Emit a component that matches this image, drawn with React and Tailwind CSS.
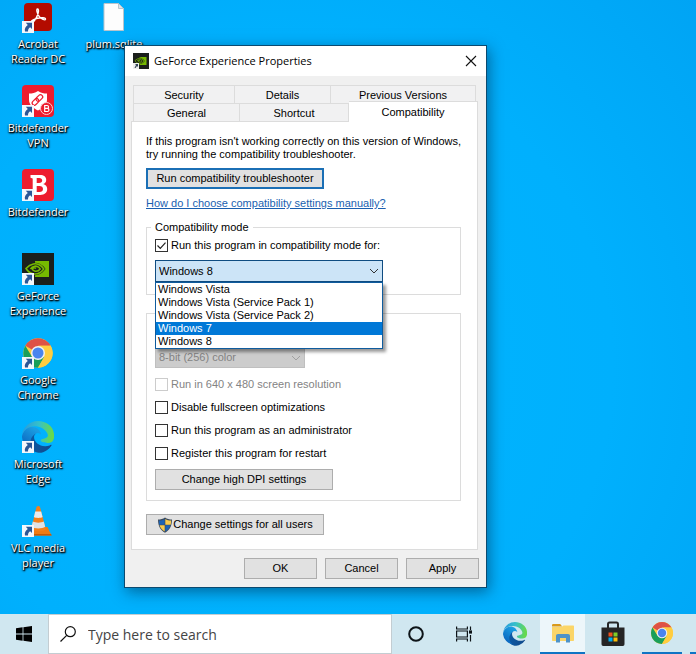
// src/App.jsx
import { useState } from "react";

const OS_OPTIONS = [
  "Windows Vista",
  "Windows Vista (Service Pack 1)",
  "Windows Vista (Service Pack 2)",
  "Windows 7",
  "Windows 8",
];

/* ---------- icons ---------- */

function ShortcutArrow() {
  return (
    <svg viewBox="0 0 12 12" className="absolute bottom-0 left-0 size-3" aria-hidden="true">
      <rect width="12" height="12" fill="#f4f7fb" />
      <path d="M3.800 1.800h6.200v6.200L8.200 6.300C6.600 7.200 6 8.500 6 10.400H3C2.200 7.600 3.700 5.300 5.800 4z" fill="#2b5797" />
    </svg>
  );
}

function AcrobatIcon() {
  return (
    <svg viewBox="0 0 32 32" className="size-8" aria-hidden="true">
      <rect x="2" y="2" width="28" height="28" rx="4" fill="#b30b00" />
      <path
        d="M15.500 8c1.800 0 .9 5-1 8.400-1.700 3.200-4 6-5.200 5.200-1.300-1.100 2.200-3.400 6.200-4.300 3.700-.9 8.200-.8 8 .9-.3 1.700-4.200-.2-6.200-2.600C15.200 13.100 14 8 15.500 8z"
        fill="none"
        stroke="#fff"
        strokeWidth="1.400"
      />
    </svg>
  );
}

function VpnIcon() {
  return (
    <svg viewBox="0 0 32 32" className="size-8" aria-hidden="true">
      <rect width="32" height="32" rx="4" fill="#ed1c2e" />
      <path d="M16 6c3 2 5.500 2.500 9 2.500v6c0 5.500-3.500 8-9 11-5.500-3-9-5.500-9-11v-6c3.500 0 6-.5 9-2.500z" fill="#fff" />
      <g fill="none" stroke="#ed1c2e" strokeWidth="1.200" transform="rotate(-45 15.500 15)">
        <rect x="9" y="12.700" width="7.500" height="4.400" rx="2.200" />
        <rect x="14.500" y="12.700" width="7.500" height="4.400" rx="2.200" />
      </g>
      <circle cx="24.500" cy="23.500" r="6" fill="#ed1c2e" stroke="#fbd0d4" strokeWidth="1" />
      <path d="M22.700 20.500h2.400a1.400 1.400 0 0 1 0 2.900h-2.400zM22.700 23.400h2.700a1.500 1.500 0 0 1 0 3.100h-2.700z" fill="none" stroke="#fff" strokeWidth="1.200" />
    </svg>
  );
}

function BitdefenderIcon() {
  return (
    <svg viewBox="0 0 32 32" className="size-8" aria-hidden="true">
      <rect width="32" height="32" rx="4" fill="#ed1c2e" />
      <path
        fillRule="evenodd"
        d="M8.500 6H18c4 0 6.200 2 6.200 4.900 0 2-1.100 3.500-3 4.200 2.500.6 4 2.400 4 5 0 3.500-2.700 5.900-7 5.900H8.500v-2.800l2.200-.6V9.400l-2.200-.6zM14.700 9v5h2.500c1.900 0 3-.9 3-2.500S19.100 9 17.200 9zM14.700 17v6h2.800c2.200 0 3.500-1.100 3.500-3s-1.300-3-3.500-3z"
        fill="#fff"
      />
    </svg>
  );
}

function NvidiaIcon({ className }) {
  return (
    <svg viewBox="0 0 32 32" className={className} aria-hidden="true">
      <rect width="32" height="32" fill="#1b1f1c" />
      <path d="M13 8h14v16H13z" fill="#76b900" />
      <path d="M3 15.500C7 10 13 8.500 17 10.500c4 1.800 5.500 4 6.500 5.500-3 4.500-8 7-12.500 6-3.500-.8-6-3-8-6.500z" fill="#1b1f1c" />
      <g fill="none" stroke="#76b900" strokeWidth="1.600">
        <path d="M4 15.500c4.500-5 10.500-6 14.500-3 1.700 1.200 2.600 2.400 3.300 3.500-3 4-7 5.600-10.800 4.800-3-.7-5.300-2.600-7-5.300z" />
        <path d="M8.500 16c2-3 6-3.800 8.500-1.500.8.700.9 1.200 1.200 1.500-1.600 2-3.600 2.600-5.700 2-1.400-.4-1.900-1.200-2.200-2 .9-1.200 2.400-1.500 3.700-.6" />
      </g>
    </svg>
  );
}

function ChromeIcon({ className }) {
  return (
    <svg viewBox="0 0 48 48" className={className} aria-hidden="true">
      <circle cx="24" cy="24" r="22" fill="#ffcd40" />
      <path d="M24 24 4.950 13A22 22 0 0 1 43.050 13H24z" fill="#de5246" />
      <path d="M4.950 13A22 22 0 0 0 24 46l9.500-16.500-18.500 0z" fill="#1a9f5a" />
      <path d="M24 13h19.050A22 22 0 0 1 24 46l9.500-16.500A11 11 0 0 0 24 13z" fill="#ffcd40" />
      <circle cx="24" cy="24" r="10.500" fill="#f1f1f1" />
      <circle cx="24" cy="24" r="8.300" fill="#4a84ee" />
    </svg>
  );
}

function EdgeIcon({ className, id }) {
  return (
    <svg viewBox="0 0 256 256" className={className} aria-hidden="true">
      <defs>
        <linearGradient id={`${id}-base`} x1="60" y1="170" x2="235" y2="200" gradientUnits="userSpaceOnUse">
          <stop stopColor="#0c59a4" />
          <stop offset="1" stopColor="#114a8b" />
        </linearGradient>
        <linearGradient id={`${id}-mid`} x1="140" y1="90" x2="50" y2="220" gradientUnits="userSpaceOnUse">
          <stop stopColor="#1b9de2" />
          <stop offset="1" stopColor="#0a67c0" />
        </linearGradient>
        <linearGradient id={`${id}-top`} x1="20" y1="60" x2="240" y2="90" gradientUnits="userSpaceOnUse">
          <stop stopColor="#2a9fdc" />
          <stop offset="0.5" stopColor="#36c1c9" />
          <stop offset="1" stopColor="#66d94e" />
        </linearGradient>
      </defs>
      <path
        d="M231 190a94 94 0 0 1-10 5 102 102 0 0 1-36 6c-48 0-89-33-89-75a32 32 0 0 1 16-27c-43 2-54 47-54 73 0 75 68 82 83 82 8 0 20-2 27-5l1 0a128 128 0 0 0 67-54 4 4 0 0 0-5-5z"
        fill={`url(#${id}-base)`}
      />
      <path
        d="M106 241A79 79 0 0 1 83 220a81 81 0 0 1 29-121c3-1 8-4 15-4a33 33 0 0 1 26 13C146 60 90 30 40 60 10 80 0 110 0 130a128 128 0 0 0 106 111z"
        fill={`url(#${id}-mid)`}
      />
      <path
        d="M152 149c-1 1-3 3-3 7 0 3 2 6 6 8 17 12 50 11 50 11a71 71 0 0 0 36-10 73 73 0 0 0 15-61C250 40 190 0 128 0A128 128 0 0 0 0 126c1-46 47-84 102-84 5 0 32 0 58 14 22 12 33 26 41 39 8 14 10 32-7 39-20 10-38 10-42 15z"
        fill={`url(#${id}-top)`}
      />
    </svg>
  );
}

function VlcIcon() {
  return (
    <svg viewBox="0 0 32 32" className="size-8" aria-hidden="true">
      <path d="M9 22h16.500l4 8.500H6z" fill="#f07b13" />
      <path d="M6.500 29h22.600l.6 1.600H6z" fill="#c95a05" />
      <path d="M14.500 2c.8-1.200 2.800-1.200 3.500 0l5.800 22c-1 3-13 3-14.600 0z" fill="#f4801a" />
      <path d="M13.200 6.500h6l1.400 5.500c-2 1.200-6.700 1.200-8.700 0z" fill="#e9ebee" />
      <path d="M10.800 16.500c3 1.500 8 1.500 11 0l1.400 5.200c-3 2.300-11 2.300-13.700 0z" fill="#dfe2e6" />
    </svg>
  );
}

function FileIcon() {
  return (
    <svg viewBox="0 0 32 32" className="size-8" aria-hidden="true">
      <path d="M6 2.500h14.500l5 5v22H6z" fill="#fdfdfd" stroke="#b8c4cc" strokeWidth="1" />
      <path d="M20.500 2.500v5h5z" fill="#e1e5e8" stroke="#b8c4cc" strokeWidth="1" />
    </svg>
  );
}

function ShieldIcon() {
  return (
    <svg viewBox="0 0 16 16" className="size-4" aria-hidden="true">
      <path d="M8 .5C10 2 12.500 2.500 15 2.500 15 9 12.500 13.500 8 15.700 3.500 13.500 1 9 1 2.500 3.500 2.500 6 2 8 .5z" fill="#3c4a5c" />
      <path d="M7.700 1.900v5.900H2.300C2 6.500 1.900 5 1.900 3.500c2.200-.1 4.200-.6 5.800-1.600z" fill="#1d63b4" />
      <path d="M8.300 1.900c1.600 1 3.600 1.500 5.800 1.600 0 1.500-.1 3-.4 4.300H8.300z" fill="#f8cb4c" />
      <path d="M2.500 8.300h5.200v6.200c-2.700-1.500-4.400-3.700-5.200-6.200z" fill="#f8cb4c" />
      <path d="M8.300 8.300h5.200c-.8 2.500-2.500 4.700-5.200 6.200z" fill="#1d63b4" />
    </svg>
  );
}

function ChevronDown({ className }) {
  return (
    <svg viewBox="0 0 10 10" className={className} fill="none" stroke="currentColor" strokeWidth="1" aria-hidden="true">
      <path d="M1 3l4 4 4-4" />
    </svg>
  );
}

/* ---------- desktop ---------- */

const SHORTCUTS = [
  { label: "Acrobat Reader DC", icon: <AcrobatIcon /> },
  { label: "Bitdefender VPN", icon: <VpnIcon /> },
  { label: "Bitdefender", icon: <BitdefenderIcon /> },
  { label: "GeForce Experience", icon: <NvidiaIcon className="size-8" /> },
  { label: "Google Chrome", icon: <ChromeIcon className="size-8" /> },
  { label: "Microsoft Edge", icon: <EdgeIcon className="size-8" id="desk" /> },
  { label: "VLC media player", icon: <VlcIcon /> },
];

function DesktopItem({ label, icon, shortcut = true }) {
  return (
    <button type="button" className="flex h-21 w-19 flex-col items-center gap-[3px]">
      <span className="relative size-8">
        {icon}
        {shortcut && <ShortcutArrow />}
      </span>
      <span className="px-1 text-center text-[11px] leading-[15px] text-white [text-shadow:1px_1px_2px_#000,0_1px_2px_#000,1px_1px_1px_#012]">
        {label}
      </span>
    </button>
  );
}

/* ---------- dialog ---------- */

function Tab({ children, className }) {
  return (
    <button
      type="button"
      role="tab"
      aria-selected="false"
      className={`h-[18px] border-t border-r border-[#dcdcdc] bg-[#f1f1f2] pt-px leading-[13px] ${className}`}
    >
      {children}
    </button>
  );
}

function PushButton({ children, className }) {
  return (
    <button
      type="button"
      className={`flex h-[21px] items-center justify-center border bg-[#e1e1e1] whitespace-nowrap hover:bg-[#e5f1fb] ${className}`}
    >
      {children}
    </button>
  );
}

function CheckBox({ label, checked, onChange, disabled }) {
  return (
    <label className={`flex items-center gap-[3px] leading-[13px] ${disabled ? "text-[#838383]" : ""}`}>
      <span className="grid size-[13px]">
        <input
          type="checkbox"
          checked={checked}
          disabled={disabled}
          onChange={(e) => onChange(e.target.checked)}
          className="col-start-1 row-start-1 size-[13px] appearance-none border border-[#333] bg-white disabled:border-[#ccc]"
        />
        {checked && (
          <svg viewBox="0 0 13 13" className="pointer-events-none col-start-1 row-start-1" fill="none" stroke="#222" strokeWidth="1.200">
            <path d="M2.500 6.500l2.800 2.800 5.200-5.600" />
          </svg>
        )}
      </span>
      {label}
    </label>
  );
}

function PropertiesDialog() {
  const [os, setOs] = useState("Windows 8");
  const [open, setOpen] = useState(true);
  const [flags, setFlags] = useState({ compat: true, fullscreen: false, admin: false, restart: false });

  const setFlag = (key) => (value) => setFlags({ ...flags, [key]: value });

  return (
    <section
      role="dialog"
      aria-labelledby="dialog-title"
      className="absolute top-[45px] left-[124px] w-[363px] border border-[#0b4a70] bg-[#f0f0f0] pb-2 font-['Liberation_Sans',Arial,sans-serif] text-[11px] text-black shadow-[2px_4px_14px_rgba(0,30,60,0.5)]"
    >
      <header className="flex h-[30px] items-center bg-white pr-[9px] pl-2">
        <span className="relative mr-[5px] size-4">
          <NvidiaIcon className="size-4" />
          <svg viewBox="0 0 12 12" className="absolute bottom-0 left-0 size-1.5" aria-hidden="true">
            <rect width="12" height="12" fill="#eee" />
            <path d="M4 2h6v6L8 6 5 10H3l3-6z" fill="#345" />
          </svg>
        </span>
        <h1 id="dialog-title" className="flex-1 font-['Open_Sans','Noto_Sans',sans-serif] text-[11px]">
          GeForce Experience Properties
        </h1>
        <button type="button" aria-label="Close">
          <svg viewBox="0 0 12 12" className="size-3" stroke="#111" strokeWidth="1.100" aria-hidden="true">
            <path d="M1 1l10 10M11 1L1 11" />
          </svg>
        </button>
      </header>

      <div role="tablist" className="mt-[9px] mr-2 ml-2">
        <div className="mr-0.5 flex border-l border-[#dcdcdc]">
          <Tab className="w-[101px]">Security</Tab>
          <Tab className="w-24">Details</Tab>
          <Tab className="flex-1">Previous Versions</Tab>
        </div>
        <div className="-mt-0.5 flex h-5 items-end">
          <Tab className="w-[107px] border-l">General</Tab>
          <Tab className="w-[109px]">Shortcut</Tab>
          <button
            type="button"
            role="tab"
            aria-selected="true"
            className="relative h-[21px] flex-1 self-start border-t border-r border-[#dcdcdc] bg-white leading-[13px]"
          >
            Compatibility
          </button>
        </div>
      </div>

      <div role="tabpanel" className="mr-2 ml-1.5 border border-[#dcdcdc] bg-white pt-[13px] pr-4 pb-[14px] pl-[14px] leading-[13px]">
        <p className="whitespace-nowrap">
          If this program isn't working correctly on this version of Windows,
          <br />
          try running the compatibility troubleshooter.
        </p>
        <PushButton className="mt-[7px] w-[178px] border-2 border-[#1b6fb5]">Run compatibility troubleshooter</PushButton>
        <a href="#help" className="mt-2 block w-fit text-[#1a5fb0] underline">
          How do I choose compatibility settings manually?
        </a>

        <fieldset className="mt-[11px] border border-[#dcdcdc] px-2 pb-3">
          <legend className="-ml-1 px-1">Compatibility mode</legend>
          <div className="pt-[5px]">
            <CheckBox
              label="Run this program in compatibility mode for:"
              checked={flags.compat}
              onChange={setFlag("compat")}
            />
          </div>
          <div className="relative mt-2 w-[228px]">
            <select
              aria-label="Compatibility mode"
              value={os}
              onChange={(e) => setOs(e.target.value)}
              onMouseDown={(e) => {
                e.preventDefault();
                setOpen(!open);
              }}
              className="block h-[22px] w-full appearance-none border border-[#0f4c81] bg-[#cce4f7] pl-[3px]"
            >
              {OS_OPTIONS.map((name) => (
                <option key={name}>{name}</option>
              ))}
            </select>
            <ChevronDown className="pointer-events-none absolute top-1.5 right-1 size-2.5 text-[#333]" />
            {open && (
              <ul
                role="listbox"
                className="absolute top-full left-0 z-10 w-full border border-[#0f5c9e] bg-white shadow-[3px_3px_3px_rgba(0,0,0,0.4)]"
              >
                {OS_OPTIONS.map((name) => (
                  <li
                    key={name}
                    role="option"
                    aria-selected={name === "Windows 7"}
                    onClick={() => {
                      setOs(name);
                      setOpen(false);
                    }}
                    className="pl-0.5 aria-selected:bg-[#0078d7] aria-selected:text-white"
                  >
                    {name}
                  </li>
                ))}
              </ul>
            )}
          </div>
        </fieldset>

        <fieldset aria-label="Settings" className="mt-[18px] border border-[#dcdcdc] px-2 pt-[33px] pb-[10px]">
          <div className="relative w-[150px]">
            <select
              disabled
              aria-label="Color mode"
              className="block h-[21px] w-full appearance-none border border-[#bfbfbf] bg-[#cccccc] pl-[3px] text-[#838383] opacity-100"
            >
              <option>8-bit (256) color</option>
            </select>
            <ChevronDown className="pointer-events-none absolute top-1.5 right-1 size-2.5 text-[#a0a0a0]" />
          </div>
          <div className="mt-[10px] flex flex-col gap-[10px]">
            <CheckBox label="Run in 640 x 480 screen resolution" checked={false} disabled onChange={() => {}} />
            <CheckBox label="Disable fullscreen optimizations" checked={flags.fullscreen} onChange={setFlag("fullscreen")} />
            <CheckBox label="Run this program as an administrator" checked={flags.admin} onChange={setFlag("admin")} />
            <CheckBox label="Register this program for restart" checked={flags.restart} onChange={setFlag("restart")} />
          </div>
          <PushButton className="mt-[9px] w-[178px] border-[#adadad]">Change high DPI settings</PushButton>
        </fieldset>

        <PushButton className="mt-[13px] w-[178px] border-[#adadad]">
          <ShieldIcon />
          Change settings for all users
        </PushButton>
      </div>

      <footer className="mt-2 mr-[7px] flex justify-end gap-2">
        <PushButton className="w-[73px] border-[#adadad]">OK</PushButton>
        <PushButton className="w-[73px] border-[#adadad]">Cancel</PushButton>
        <PushButton className="w-[73px] border-[#adadad]">Apply</PushButton>
      </footer>
    </section>
  );
}

/* ---------- taskbar ---------- */

function TaskbarButton({ label, className, children }) {
  return (
    <button type="button" aria-label={label} className={`flex h-full shrink-0 items-center justify-center ${className}`}>
      {children}
    </button>
  );
}

function Taskbar() {
  return (
    <nav className="flex h-10 overflow-hidden bg-[#d0e7f0]">
      <TaskbarButton label="Start" className="w-12">
        <svg viewBox="0 0 16 16" className="size-4" aria-hidden="true">
          <path d="M0 2.200l6.600-.9v6.300H0zM7.400 1.200L16 0v7.600H7.400zM0 8.400h6.600v6.300L0 13.800zM7.400 8.400H16V16l-8.600-1.200z" />
        </svg>
      </TaskbarButton>
      <label className="flex w-[344px] items-center gap-3 border border-[#c3cdd2] bg-white pl-[11px]">
        <svg viewBox="0 0 16 16" className="size-4 shrink-0" fill="none" stroke="#111" strokeWidth="1.200" aria-hidden="true">
          <circle cx="10.300" cy="5.700" r="5" />
          <path d="M6.700 9.300L.5 15.500" />
        </svg>
        <input
          type="search"
          aria-label="Search"
          placeholder="Type here to search"
          className="min-w-0 flex-1 bg-transparent text-[14px] text-[#333] outline-none placeholder:text-[#444]"
        />
      </label>
      <TaskbarButton label="Cortana" className="w-12">
        <svg viewBox="0 0 16 16" className="size-4" fill="none" stroke="#0d1418" strokeWidth="2" aria-hidden="true">
          <circle cx="8" cy="8" r="6.800" />
        </svg>
      </TaskbarButton>
      <TaskbarButton label="Task view" className="w-12">
        <svg viewBox="0 0 16 16" className="size-4" fill="none" stroke="#0d1418" strokeWidth="1.200" aria-hidden="true">
          <path d="M.6.500v2.500h10.800V.5M.6 15.500V13h10.800v2.500M.6 5h10.800v6H.6zM14.500.500v3.500M14.500 9v6.500" />
          <rect x="13.600" y="5" width="1.800" height="2" fill="#0d1418" />
        </svg>
      </TaskbarButton>
      <TaskbarButton label="Microsoft Edge" className="ml-0.5 w-[50px]">
        <EdgeIcon className="size-6" id="bar" />
      </TaskbarButton>
      <TaskbarButton label="File Explorer" className="mr-1 w-[45px] border-b-2 border-[#0f74c4] bg-[#edf6fa]">
        <svg viewBox="0 0 24 22" className="h-[22px] w-6" aria-hidden="true">
          <path d="M1 3.500c0-.8.4-1.500 1.200-1.500h7l2 2.500H1z" fill="#d99a1c" />
          <path d="M1 5h9.500l2-1.500H22c.7 0 1 .4 1 1V18c0 .6-.4 1-1 1H2c-.6 0-1-.4-1-1z" fill="#fbd568" />
          <path d="M5 20.500v-6.500c0-1.300.7-2 2-2h10c1.300 0 2 .7 2 2v6.500h-4V16H9v4.500z" fill="#4f93c8" />
        </svg>
      </TaskbarButton>
      <TaskbarButton label="Microsoft Store" className="w-[47px]">
        <svg viewBox="0 0 24 26" className="h-[26px] w-6" aria-hidden="true">
          <path d="M7 8V3.200C7 2 7.600 1.500 8.500 1.500h7c1 0 1.500.6 1.500 1.700V8" fill="none" stroke="#252525" strokeWidth="2" />
          <path d="M.5 6.500h23V23c0 1.200-.6 2-1.800 2H2.300C1.100 25 .5 24.200.5 23z" fill="#252525" />
          <path d="M7.500 11.500h4v4h-4z" fill="#f1511b" />
          <path d="M12.500 11.500h4v4h-4z" fill="#80cc28" />
          <path d="M7.500 16.500h4v4h-4z" fill="#00adef" />
          <path d="M12.500 16.500h4v4h-4z" fill="#fbbc09" />
        </svg>
      </TaskbarButton>
      <TaskbarButton label="Google Chrome" className="mr-1 ml-1.5 w-10 border-b-2 border-[#0f74c4]">
        <ChromeIcon className="size-6" />
      </TaskbarButton>
      <div className="ml-1 min-w-0 flex-1 border-b-2 border-[#0f74c4]" />
    </nav>
  );
}

export default function App() {
  return (
    <div className="flex min-h-screen flex-col bg-[#00b0fb] font-['Open_Sans','Noto_Sans',sans-serif]">
      <main className="relative flex flex-1 items-start overflow-hidden bg-[radial-gradient(circle_at_40%_60%,#00b6ff_0%,#00b0fd_60%,#00a4f4_100%)] pt-px">
        <div className="flex flex-col">
          {SHORTCUTS.map((item) => (
            <DesktopItem key={item.label} {...item} />
          ))}
        </div>
        <DesktopItem label="plum.sqlite" icon={<FileIcon />} shortcut={false} />
        <PropertiesDialog />
      </main>
      <Taskbar />
    </div>
  );
}
